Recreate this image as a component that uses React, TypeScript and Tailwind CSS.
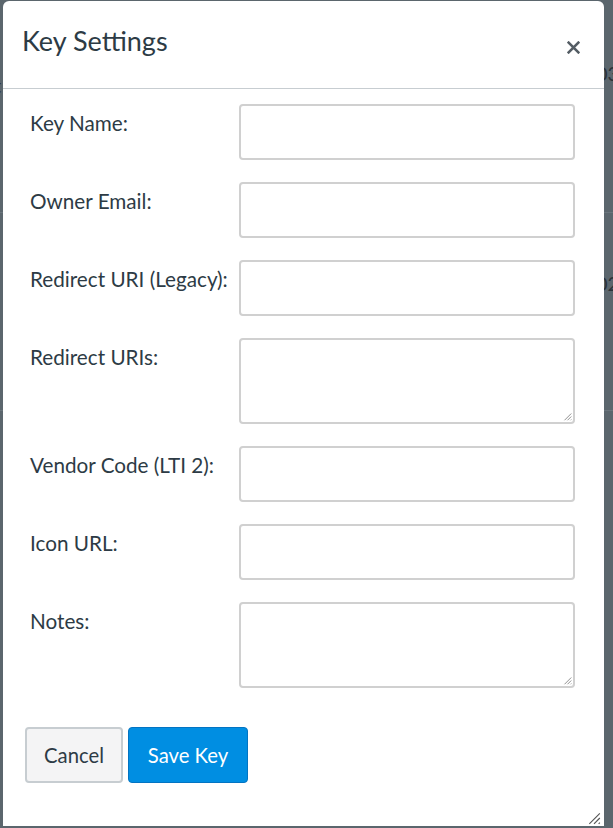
import React from "react";

const fields: { label: string; tall?: boolean }[] = [
  { label: "Key Name:" },
  { label: "Owner Email:" },
  { label: "Redirect URI (Legacy):" },
  { label: "Redirect URIs:", tall: true },
  { label: "Vendor Code (LTI 2):" },
  { label: "Icon URL:" },
  { label: "Notes:", tall: true },
];

function Grip({ className }: { className: string }) {
  return (
    <svg className={className} viewBox="0 0 12 12" fill="none" stroke="currentColor" strokeWidth="1">
      <path d="M11 2 L2 11 M11 6 L6 11 M11 10 L10 11" />
    </svg>
  );
}

export default function App() {
  return (
    <div
      className="relative h-[828px] w-[613px] overflow-hidden bg-[#5b666d]"
      style={{ fontFamily: "Lato, 'Open Sans', sans-serif" }}
    >
      {/* page behind the overlay */}
      <div className="absolute inset-0 text-[20px] text-[#2b3339]">
        <div className="absolute left-[596px] top-[58px]">03:</div>
        <div className="absolute left-0 top-[212px] h-px w-full bg-[#6a757c]" />
        <div className="absolute left-[596px] top-[268px]">02:</div>
        <div className="absolute left-0 top-[410px] h-px w-full bg-[#6a757c]" />
        <div className="absolute left-[-6px] top-[70px]">t</div>
      </div>

      <div className="absolute left-[3px] top-[1px] flex h-[825px] w-[601px] flex-col rounded-t-[6px] bg-white text-[#2d3b45]">
        <header className="flex h-[88px] shrink-0 items-start justify-between border-b border-[#c7cdd1] pl-[19px] pr-[24px]">
          <h2 className="pt-[24px] text-[27px] font-normal leading-[32px]">Key Settings</h2>
          <svg className="mt-[40px] h-[13px] w-[13px] text-[#545d64]" viewBox="0 0 12 12" stroke="currentColor" strokeWidth="2.4" strokeLinecap="square">
            <path d="M1.5 1.5 L10.5 10.5 M10.5 1.5 L1.5 10.5" />
          </svg>
        </header>

        <div className="flex flex-col gap-[22px] pl-[27px] pr-[29px] pt-[15px]">
          {fields.map((f) => (
            <div key={f.label} className="flex">
              <label className="w-[209px] shrink-0 pt-[7px] text-[20.7px] leading-[25px]">{f.label}</label>
              <div
                className={`relative flex-1 rounded-[4px] border-2 border-[#d0d0d0] bg-white ${f.tall ? "h-[86px]" : "h-[56px]"}`}
              >
                {f.tall && <Grip className="absolute bottom-[1px] right-[1px] h-[9px] w-[9px] text-[#6b6b6b]" />}
              </div>
            </div>
          ))}
        </div>

        <div className="flex gap-[5px] pl-[22px] pt-[39px]">
          <button className="h-[56px] w-[98px] rounded-[4px] border-2 border-[#c7cdd1] bg-[#f4f4f5] text-[20.3px] text-[#2d3b45]">
            Cancel
          </button>
          <button className="h-[56px] w-[120px] rounded-[4px] border border-[#0374c2] bg-[#008ee2] text-[20.3px] text-white">
            Save Key
          </button>
        </div>

        <div className="flex flex-1 items-end justify-end pb-[1px] pr-[3px]">
          <Grip className="h-[14px] w-[14px] text-[#555]" />
        </div>
      </div>
    </div>
  );
}
